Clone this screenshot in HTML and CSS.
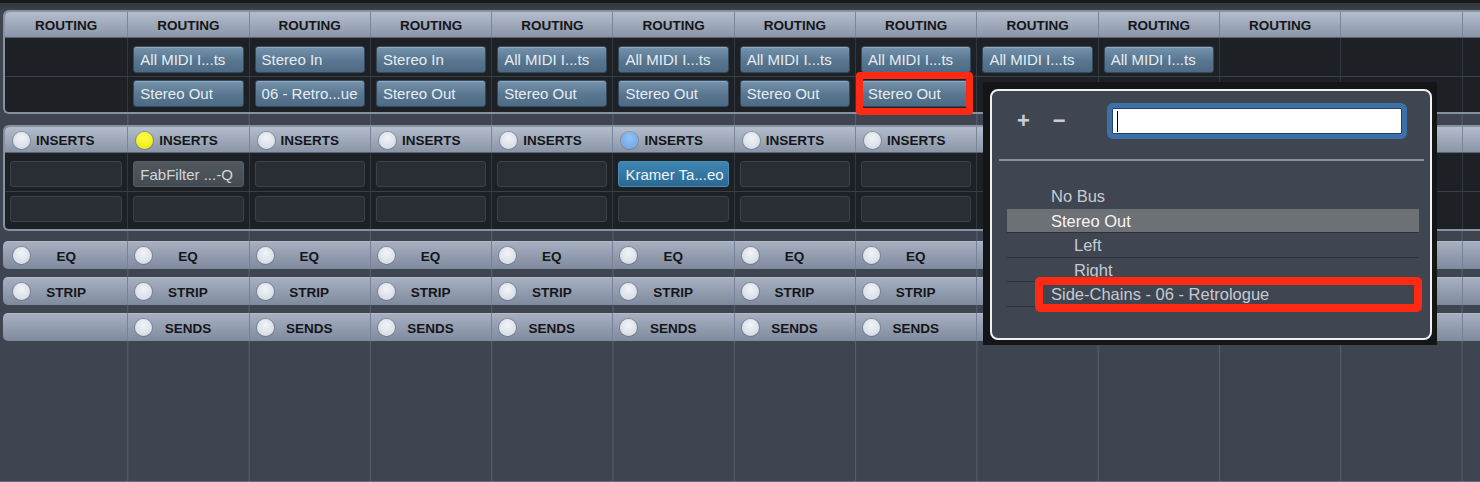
FILE: index.html
```html
<!DOCTYPE html>
<html lang="en">
<head>
<meta charset="UTF-8">
<meta name="viewport" content="width=device-width, initial-scale=1.0">
<title>Mixer Routing</title>
<link rel="stylesheet" href="styles.css">
</head>
<body>

<div class="mixer">
  <div class="topbar"></div>

  <!-- Routing section -->
  <section class="panel routing">
    <div class="row head" id="routingHead"></div>
    <div class="row row-a" id="routingIn"></div>
    <div class="row row-b" id="routingOut"></div>
  </section>

  <!-- Inserts section -->
  <section class="panel inserts">
    <div class="row head head-left" id="insertsHead"></div>
    <div class="row row-a" id="insertSlot1"></div>
    <div class="row row-b" id="insertSlot2"></div>
  </section>

  <div class="row bar first-bar" id="eqBar"></div>
  <div class="row bar" id="stripBar"></div>
  <div class="row bar" id="sendsBar"></div>

  <!-- Output bus picker -->
  <div class="picker">
    <div class="picker-box">
      <div class="picker-tools">
        <span class="tool plus">+</span>
        <span class="tool minus">&minus;</span>
        <div class="search"><span class="caret"></span></div>
      </div>
      <div class="picker-rule"></div>
      <ul class="picker-list">
        <li class="pick">No Bus</li>
        <li class="pick on">Stereo Out</li>
        <li class="pick sub">Left</li>
        <li class="pick sub">Right</li>
        <li class="pick marked">Side-Chains - 06 - Retrologue</li>
      </ul>
    </div>
  </div>
</div>

<script>
  // channels that sit under the open picker only need their top row
  var channels = [
    { routing: true, inserts: true, eq: true, strip: true },
    { routing: true, input: "All MIDI I...ts", output: "Stereo Out", inserts: true, led: "yellow", plugin: "FabFilter ...-Q", eq: true, strip: true, sends: true },
    { routing: true, input: "Stereo In", output: "06 - Retro...ue", inserts: true, eq: true, strip: true, sends: true },
    { routing: true, input: "Stereo In", output: "Stereo Out", inserts: true, eq: true, strip: true, sends: true },
    { routing: true, input: "All MIDI I...ts", output: "Stereo Out", inserts: true, eq: true, strip: true, sends: true },
    { routing: true, input: "All MIDI I...ts", output: "Stereo Out", inserts: true, led: "blue", plugin: "Kramer Ta...eo", active: true, eq: true, strip: true, sends: true },
    { routing: true, input: "All MIDI I...ts", output: "Stereo Out", inserts: true, eq: true, strip: true, sends: true },
    { routing: true, input: "All MIDI I...ts", output: "Stereo Out", marked: true, inserts: true, eq: true, strip: true, sends: true },
    { routing: true, input: "All MIDI I...ts" },
    { routing: true, input: "All MIDI I...ts" },
    { routing: true },
    {},
    {}
  ];

  function led(kind) {
    return '<span class="led' + (kind ? ' ' + kind : '') + '"></span>';
  }

  function fillRow(id, render) {
    var row = document.getElementById(id);
    channels.forEach(function(ch, index) {
      var cell = document.createElement('div');
      cell.className = 'cell';
      cell.innerHTML = render(ch, index);
      row.appendChild(cell);
    });
  }

  fillRow('routingHead', function(ch) {
    return ch.routing ? 'ROUTING' : '';
  });
  fillRow('routingIn', function(ch) {
    return ch.input ? `<div class="route-btn">${ch.input}</div>` : '';
  });
  fillRow('routingOut', function(ch) {
    return ch.output ? `<div class="route-btn${ch.marked ? ' marked' : ''}">${ch.output}</div>` : '';
  });

  fillRow('insertsHead', function(ch) {
    return ch.inserts ? led(ch.led) + '<span>INSERTS</span>' : '';
  });
  fillRow('insertSlot1', function(ch) {
    if (!ch.inserts) return '';
    if (ch.plugin) {
      return `<div class="slot ${ch.active ? 'active' : 'plugin'}">${ch.plugin}</div>`;
    }
    return '<div class="slot"></div>';
  });
  fillRow('insertSlot2', function(ch) {
    return ch.inserts ? '<div class="slot"></div>' : '';
  });

  // Section toggles under the inserts
  fillRow('eqBar', function(ch) {
    return ch.eq ? led() + '<span class="label">EQ</span>' : '';
  });
  fillRow('stripBar', function(ch) {
    return ch.strip ? led() + '<span class="label">STRIP</span>' : '';
  });
  fillRow('sendsBar', function(ch) {
    return ch.sends ? led() + '<span class="label">SENDS</span>' : '';
  });
</script>

</body>
</html>
```

FILE: styles.css
```css
  body {
    margin: 0;
    background-color: #3e4550;
    font-family: "Liberation Sans", Arial, sans-serif;
    overflow: hidden;
  }
  .mixer {
    position: relative;
    height: 481px;
    border-bottom: 1px solid #646c79;
    background-color: #3e4550;
    /* channel divider lines behind the sections */
    background-image:
      linear-gradient(90deg, #3e4550 127px, transparent 127px),
      linear-gradient(90deg, #58606d 1px, transparent 1px);
    background-size: 100% 100%, 121.3px 100%;
    background-position: 0 0, 127.3px 0;
    background-repeat: no-repeat, repeat;
  }
  .topbar {
    height: 10px;
    background: linear-gradient(#18191c 0, #18191c 3px, #33383f 3px, #3b4048 100%);
  }

  /* sections */
  .panel {
    margin-left: 3px;
    border: 2px solid #8791a0;
    border-right: 0;
    border-radius: 6px 0 0 6px;
    background-color: #1d2024;
  }
  .inserts {
    margin-top: 11px;
  }
  .row {
    display: grid;
    grid-template-columns: 122.3px repeat(11, 121.3px) 1fr;
    box-sizing: border-box;
  }
  .cell {
    box-sizing: border-box;
    min-width: 0;
  }
  .head {
    height: 26px;
    border-top-left-radius: 4px;
    background: linear-gradient(#b3bdcc, #8a95a8);
    border-bottom: 1px solid #5b6473;
  }
  .head .cell {
    display: flex;
    align-items: center;
    justify-content: center;
    padding-top: 1px;
    font-size: 13.5px;
    font-weight: bold;
    color: #141619;
    border-left: 1px solid #7a8597;
  }
  .head-left .cell {
    justify-content: flex-start;
    padding-left: 8px;
    gap: 6px;
  }
  .row .cell:first-child {
    border-left: 0;
  }
  .row-a {
    height: 39px;
    padding-top: 8px;
    border-bottom: 1px solid #3a3e45;
  }
  .row-b {
    height: 35px;
    padding-top: 3px;
  }
  .inserts .row-b {
    height: 37px;
    padding-top: 4px;
  }
  .row-a .cell,
  .row-b .cell {
    border-left: 1px solid #33373e;
    padding: 0 5px;
    margin-top: -8px;
    padding-top: 8px;
  }
  .row-b .cell {
    margin-top: -3px;
    padding-top: 3px;
  }
  .inserts .row-b .cell {
    margin-top: -4px;
    padding-top: 4px;
  }

  /* routing buttons */
  .route-btn {
    position: relative;
    height: 27px;
    box-sizing: border-box;
    padding-left: 6px;
    border: 1px solid #34495c;
    border-radius: 3px;
    background: linear-gradient(#7593ac, #587690 55%, #4d6b85);
    box-shadow: inset 0 1px 0 rgba(255, 255, 255, 0.22);
    color: #e6edf2;
    font-size: 15px;
    line-height: 26px;
    white-space: nowrap;
  }
  .route-btn.marked::after {
    content: "";
    position: absolute;
    left: -6px;
    right: -3px;
    top: -9px;
    bottom: -9px;
    border: 7px solid #ff2a14;
    border-radius: 4px;
  }

  /* insert slots */
  .slot {
    height: 26px;
    box-sizing: border-box;
    padding-left: 6px;
    border: 1px solid #3d424a;
    border-radius: 3px;
    background-color: #292d34;
    font-size: 15px;
    line-height: 25px;
    white-space: nowrap;
  }
  .slot.plugin {
    border-color: #585e66;
    background: linear-gradient(#52585f, #454b53);
    color: #d2d6da;
  }
  .slot.active {
    border-color: #4a8cb8;
    background: linear-gradient(#3f86b3, #2b6892);
    color: #eef4f8;
  }

  /* leds */
  .led {
    flex: none;
    width: 17px;
    height: 17px;
    border-radius: 50%;
    background: radial-gradient(circle at 50% 35%, #f1f4f8, #cfd6e0);
    box-shadow: 0 0 0 1px rgba(60, 70, 85, 0.3);
  }
  .led.yellow {
    background: radial-gradient(circle at 50% 35%, #ffff4a, #ebe500);
  }
  .led.blue {
    background: radial-gradient(circle at 50% 35%, #92c2f6, #6aa2e0);
  }

  /* EQ / STRIP / SENDS bars */
  .bar {
    margin-left: 3px;
    margin-top: 8px;
    height: 28px;
    grid-template-columns: 124.3px repeat(11, 121.3px) 1fr;
    border-radius: 5px 0 0 5px;
    background: linear-gradient(#a7b1c2, #7f8a9d);
    box-shadow: inset 0 1px 0 rgba(255, 255, 255, 0.15);
  }
  .first-bar {
    margin-top: 10px;
  }
  .bar .cell {
    display: grid;
    grid-template-columns: 17px 1fr 17px;
    align-items: center;
    padding: 2px 8px 0 7px;
    border-left: 1px solid #76819a;
    font-size: 13.5px;
    font-weight: bold;
    color: #141619;
  }
  .bar .cell:first-child {
    padding-left: 10px;
    padding-right: 8px;
  }
  .bar .led {
    margin-top: -2px;
  }
  .bar .label {
    text-align: center;
  }

  /* bus picker popup */
  .picker {
    position: absolute;
    left: 983px;
    top: 82px;
    width: 454px;
    height: 263px;
    box-sizing: border-box;
    padding: 7px 5px 5px 7px;
    background-color: #131517;
  }
  .picker-box {
    height: 100%;
    box-sizing: border-box;
    border: 2px solid #eef0f2;
    border-radius: 8px;
    background-color: #3f4651;
  }
  .picker-tools {
    display: flex;
    align-items: center;
    height: 36px;
    margin-top: 12px;
    padding-left: 25px;
  }
  .tool {
    color: #c8ced6;
    font-size: 22px;
    font-weight: bold;
    line-height: 36px;
  }
  .minus {
    margin-left: 23px;
  }
  .search {
    margin-left: 41px;
    width: 300px;
    height: 36px;
    box-sizing: border-box;
    border: 5px solid #3e70a8;
    border-radius: 6px;
    background-color: #fff;
    box-shadow: inset 0 0 0 1px #24415f;
    padding: 3px 0 0 5px;
  }
  .caret {
    display: block;
    width: 1px;
    height: 21px;
    background-color: #000;
  }
  .picker-rule {
    height: 2px;
    margin: 20px 6px 0 7px;
    background-color: #8b919a;
  }
  .picker-list {
    list-style-type: none;
    margin: 23px 11px 0 15px;
    padding: 0;
  }
  .pick {
    position: relative;
    height: 24.6px;
    box-sizing: border-box;
    padding-left: 44px;
    border-bottom: 1px solid #2d3239;
    color: #c5cbd3;
    font-size: 16.5px;
    line-height: 25px;
    white-space: nowrap;
  }
  .pick:first-child {
    border-bottom-color: transparent;
  }
  .pick.on {
    background-color: #6d7074;
    color: #f5f5f5;
  }
  .pick.sub {
    padding-left: 67px;
  }
  .pick.marked::after {
    content: "";
    position: absolute;
    left: 28px;
    right: -3px;
    top: -5px;
    bottom: -6px;
    border: 8px solid #ff2a14;
    border-radius: 5px;
  }
```
